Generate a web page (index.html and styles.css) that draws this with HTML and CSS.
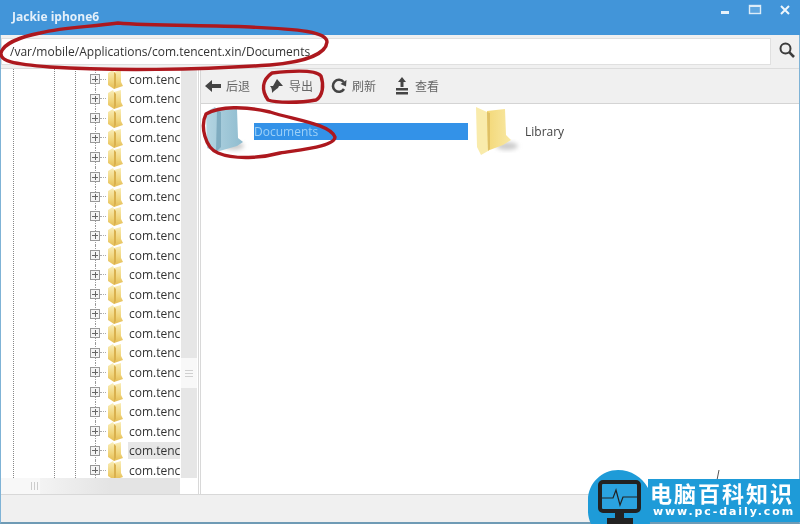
FILE: index.html
```html
<!DOCTYPE html>
<html lang="zh">
<head>
<meta charset="utf-8">
<title>Jackie iphone6</title>
<link rel="stylesheet" href="styles.css">
</head>
<body>
<svg width="0" height="0" class="defs">
  <defs>
    <linearGradient id="yel" x1="0" y1="0" x2="0" y2="1"><stop offset="0" stop-color="#f9edb8"/><stop offset="0.6" stop-color="#f0d47a"/><stop offset="1" stop-color="#e4bc55"/></linearGradient>
    <symbol id="tf" viewBox="0 0 16 20">
      <path d="M1 4 L6 1 L7 3 L14 1 L14 13 L16 17 L7 20 L1 16 Z" fill="url(#yel)"/>
      <path d="M7 3 L9 5 L9 17 L7 20 Z" fill="#d9b04e"/>
    </symbol>
    <filter id="soft" x="-30%" y="-30%" width="160%" height="160%"><feGaussianBlur stdDeviation="2"/></filter>
  </defs>
</svg>
<div class="window">
  <header class="titlebar">
    <span class="title">Jackie iphone6</span>
    <div class="winctl">
      <svg width="12" height="12" viewBox="0 0 12 12"><rect x="2" y="7" width="8" height="3" fill="#e6f1fa"/></svg>
      <svg width="14" height="12" viewBox="0 0 14 12"><rect x="1.500" y="1.500" width="11" height="8" fill="#5ea6e0" stroke="#dcecf8" stroke-width="1.400"/><rect x="1" y="1" width="12" height="2" fill="#dcecf8"/></svg>
      <svg width="12" height="12" viewBox="0 0 12 12"><path d="M2 2 L10 10 M10 2 L2 10" stroke="#eef6fc" stroke-width="2"/></svg>
    </div>
  </header>
  <div class="addr">
    <div class="path">/var/mobile/Applications/com.tencent.xin/Documents</div>
    <button class="search" aria-label="search">
      <svg width="18" height="18" viewBox="0 0 18 18"><circle cx="7.500" cy="7.500" r="5" fill="none" stroke="#3c3c3c" stroke-width="2"/><path d="M11.200 11.200 L16 16" stroke="#3c3c3c" stroke-width="2.600"/></svg>
    </button>
  </div>
  <div class="body">
    <aside class="side">
      <div class="treewrap">
        <div class="guides"><i></i><i></i><i></i></div>
        <ul class="tree">
          <li class="row"><b class="exp"></b><s class="dots"></s><svg class="tf"><use href="#tf"/></svg><span>com.tenc</span></li>
          <li class="row"><b class="exp"></b><s class="dots"></s><svg class="tf"><use href="#tf"/></svg><span>com.tenc</span></li>
          <li class="row"><b class="exp"></b><s class="dots"></s><svg class="tf"><use href="#tf"/></svg><span>com.tenc</span></li>
          <li class="row"><b class="exp"></b><s class="dots"></s><svg class="tf"><use href="#tf"/></svg><span>com.tenc</span></li>
          <li class="row"><b class="exp"></b><s class="dots"></s><svg class="tf"><use href="#tf"/></svg><span>com.tenc</span></li>
          <li class="row"><b class="exp"></b><s class="dots"></s><svg class="tf"><use href="#tf"/></svg><span>com.tenc</span></li>
          <li class="row"><b class="exp"></b><s class="dots"></s><svg class="tf"><use href="#tf"/></svg><span>com.tenc</span></li>
          <li class="row"><b class="exp"></b><s class="dots"></s><svg class="tf"><use href="#tf"/></svg><span>com.tenc</span></li>
          <li class="row"><b class="exp"></b><s class="dots"></s><svg class="tf"><use href="#tf"/></svg><span>com.tenc</span></li>
          <li class="row"><b class="exp"></b><s class="dots"></s><svg class="tf"><use href="#tf"/></svg><span>com.tenc</span></li>
          <li class="row"><b class="exp"></b><s class="dots"></s><svg class="tf"><use href="#tf"/></svg><span>com.tenc</span></li>
          <li class="row"><b class="exp"></b><s class="dots"></s><svg class="tf"><use href="#tf"/></svg><span>com.tenc</span></li>
          <li class="row"><b class="exp"></b><s class="dots"></s><svg class="tf"><use href="#tf"/></svg><span>com.tenc</span></li>
          <li class="row"><b class="exp"></b><s class="dots"></s><svg class="tf"><use href="#tf"/></svg><span>com.tenc</span></li>
          <li class="row"><b class="exp"></b><s class="dots"></s><svg class="tf"><use href="#tf"/></svg><span>com.tenc</span></li>
          <li class="row"><b class="exp"></b><s class="dots"></s><svg class="tf"><use href="#tf"/></svg><span>com.tenc</span></li>
          <li class="row"><b class="exp"></b><s class="dots"></s><svg class="tf"><use href="#tf"/></svg><span>com.tenc</span></li>
          <li class="row"><b class="exp"></b><s class="dots"></s><svg class="tf"><use href="#tf"/></svg><span>com.tenc</span></li>
          <li class="row"><b class="exp"></b><s class="dots"></s><svg class="tf"><use href="#tf"/></svg><span>com.tenc</span></li>
          <li class="row hl"><b class="exp"></b><s class="dots"></s><svg class="tf"><use href="#tf"/></svg><span>com.tenc</span></li>
          <li class="row"><b class="exp"></b><s class="dots"></s><svg class="tf"><use href="#tf"/></svg><span>com.tenc</span></li>
        </ul>
        <div class="vscroll"><div class="vtrack top"></div><div class="vthumb"><em></em><em></em><em></em></div><div class="vtrack"></div></div>
      </div>
      <div class="hscroll"><div class="hthumb"><em></em><em></em><em></em></div><div class="htrack"></div><div class="hend"></div></div>
    </aside>
    <main class="main">
      <nav class="toolbar">
        <span class="tool">
          <svg width="16" height="14" viewBox="0 0 16 14"><path d="M0 7 L7 1 L7 5 L16 5 L16 9 L7 9 L7 13 Z" fill="#444"/></svg>后退
        </span>
        <span class="tool">
          <svg width="16" height="16" viewBox="0 0 16 16"><path d="M9 1 L15 8 L11 8 L10 10 C8 11 6 13 4 15 C4 12 4 10 2 8 L5 8 Z" fill="#444"/></svg>导出
        </span>
        <span class="tool">
          <svg width="16" height="16" viewBox="0 0 16 16"><path d="M13 11 A6 6 0 1 1 12.600 4" fill="none" stroke="#444" stroke-width="2.600"/><path d="M15.500 2 L15 8.500 L9.500 6 Z" fill="#444"/></svg>刷新
        </span>
        <span class="tool">
          <svg width="16" height="18" viewBox="0 0 16 18"><path d="M8 0 L12 5 L9.500 5 L9.500 10 L6.500 10 L6.500 5 L4 5 Z" fill="#444"/><rect x="2" y="11" width="12" height="2.500" fill="#444"/><rect x="2" y="15" width="12" height="2.500" fill="#444"/></svg>查看
        </span>
      </nav>
      <section class="files">
        <div class="file sel">
          <svg class="bigf" width="52" height="52" viewBox="0 0 52 52">
            <defs><linearGradient id="blu" x1="0" y1="0" x2="1" y2="0"><stop offset="0" stop-color="#b4d5e2"/><stop offset="1" stop-color="#8fbccf"/></linearGradient></defs>
            <ellipse cx="33" cy="41" rx="10" ry="4" fill="#ccc" filter="url(#soft)"/>
            <path d="M5 7 L14 2 L16 5 L36 4 L37 33 L42 37 L36 41 L15 47 L6 43 Z" fill="url(#blu)"/>
            <path d="M16 5 L20 7 L20 42 L15 47 Z" fill="#7facc0"/>
          </svg>
          <span class="name"><span class="nametxt">Documents</span></span>
        </div>
        <div class="file lib">
          <svg class="bigf" width="52" height="52" viewBox="0 0 52 52">
            <defs><linearGradient id="ye2" x1="0" y1="0" x2="1" y2="0"><stop offset="0" stop-color="#f3d878"/><stop offset="1" stop-color="#f8e8a4"/></linearGradient></defs>
            <ellipse cx="32" cy="41" rx="11" ry="4" fill="#ccc" filter="url(#soft)"/>
            <path d="M12 6 L30 4 L31 30 L36 35 L28 40 L12 46 Z" fill="url(#ye2)"/>
            <path d="M1 2 L12 7 L13 46 L6 50 L2 42 Z" fill="#f9ebab"/>
            <path d="M12 7 L15 8 L15 44 L13 46 Z" fill="#dfc065"/>
          </svg>
          <span class="libname">Library</span>
        </div>
      </section>
    </main>
  </div>
  <footer class="status"></footer>
</div>

<svg class="marks" width="800" height="524" viewBox="0 0 800 524" aria-hidden="true">
  <g fill="none" stroke="#ad181e" stroke-width="3.400" stroke-linejoin="round" stroke-linecap="round">
    <path d="M118 23 C90 27 65 27 40 33 C20 37 3 44 1 53 C0 61 12 64 50 67 C110 71 200 70 270 65 C305 62 326 54 327 42 C327 32 300 29 250 27 C200 25 150 26 118 23 Z"/>
    <path d="M272 73 C290 71 315 69 321 76 C324 85 323 96 316 100 C300 103 276 103 268 100 C261 90 262 80 272 73 Z"/>
    <path d="M206 114 C220 106 245 106 270 112 C295 120 330 124 335 137 C335 146 305 149 280 153 C262 158 235 160 218 153 C205 148 200 126 206 114 Z"/>
  </g>
  <path d="M719 470 L717 480" stroke="#555" stroke-width="1"/>
</svg>

<div class="brand">
  <svg class="brandicon" width="62" height="55" viewBox="0 0 62 55">
    <path d="M30 1 C43 1 54 8 60 19 L62 55 L3 55 C-1 47 0 40 0 31 C0 14 14 1 30 1 Z" fill="#1e9bd8"/>
    <rect x="12" y="13" width="39" height="29" rx="3" fill="#2aa2df" stroke="#222" stroke-width="4"/>
    <path d="M14 29 L25 29 L28 21 L32 36 L35 28 L49 28" fill="none" stroke="#222" stroke-width="1.200"/>
    <rect x="27" y="43" width="9" height="6" fill="#222"/>
    <rect x="19" y="49" width="26" height="6" fill="#222"/>
  </svg>
  <div class="brandtxt">
    <div class="cn">电脑百科知识</div>
    <div class="url">www.pc-daily.com</div>
  </div>
</div>
</body>
</html>
```
FILE: styles.css
```css
* { box-sizing: border-box; }
html, body { margin: 0; padding: 0; }
body { width: 800px; height: 524px; overflow: hidden; position: relative; background: #fff; font-family: "Open Sans", "Noto Sans CJK SC", sans-serif; color: #333; }
.defs { position: absolute; }

.window { width: 800px; height: 524px; display: flex; flex-direction: column; background: #fff; border-bottom: 2px solid #6f9bb5; border-left: 1px solid #7fb3d6; border-right: 1px solid #7fb3d6; filter: blur(0.35px); }
.titlebar { height: 35px; margin: 0 -1px; background: #4295d9; display: flex; align-items: flex-start; justify-content: space-between; padding: 0 9px 0 12px; flex: none; }
.title { font: 700 12px/34px "Open Sans", sans-serif; color: #e4f0fa; }
.winctl { display: flex; gap: 17px; padding-top: 4px; align-items: center; }

.addr { height: 34px; flex: none; display: flex; background: #f0f0f0; padding: 3px 0; border-bottom: 1px solid #dcdcdc; }
.path { width: 770px; height: 27px; background: #fff; border: 1px solid #e0e0e0; font-size: 12px; line-height: 25px; padding-left: 8px; color: #333; white-space: nowrap; }
.search { flex: 1; border: 0; background: none; padding: 3px 0 0 4px; display: flex; justify-content: center; }

.body { flex: 1; min-height: 0; display: flex; }
.side { width: 200px; flex: none; display: flex; flex-direction: column; border-right: 3px double #d8d8d8; background: #fff; }
.treewrap { flex: 1; min-height: 0; display: flex; position: relative; overflow: hidden; }
.guides { position: absolute; inset: 0; pointer-events: none; }
.guides i { position: absolute; top: 0; bottom: 0; width: 0; border-left: 1px dotted #888; }
.guides i:nth-child(1) { left: 12px; }
.guides i:nth-child(2) { left: 53px; }
.guides i:nth-child(3) { left: 74px; }
.tree { list-style: none; margin: 0; padding: 0.5px 0 0; width: 180px; flex: none; overflow: hidden; position: relative; }
.row { height: 19.55px; display: flex; align-items: center; padding-left: 89px; position: relative; white-space: nowrap; font-size: 12px; color: #333; }
.row::before { content: ""; position: absolute; left: 94px; top: 0; bottom: 0; border-left: 1px dotted #999; }
.row > * { position: relative; flex: none; }
.row span { margin-left: 5px; padding: 0 0 0 1px; display: block; width: 52px; }
.row.hl span { background: #e6e6e6; }
.exp { width: 10px; height: 10px; border: 1px solid #999; background: linear-gradient(#666,#666) center / 6px 1px no-repeat, linear-gradient(#666,#666) center / 1px 6px no-repeat, #f4f4f4; display: block; }
.dots { width: 6px; border-top: 1px dotted #aaa; display: block; }
.tf { width: 16px; height: 20px; margin-left: 1px; }

.vscroll { flex: 1; display: flex; flex-direction: column; margin-right: 1px; }
.vtrack { flex: 1; background: #e6e6e6; }
.vtrack.top { flex: none; height: 289px; }
.vthumb { height: 30px; background: #f8f8f8; display: flex; flex-direction: column; align-items: center; justify-content: center; gap: 2px; }
.vthumb em { width: 8px; height: 1px; background: #d0d0d0; display: block; }

.hscroll { height: 16px; flex: none; display: flex; }
.hthumb { width: 39px; background: #f8f8f8; display: flex; justify-content: flex-end; align-items: center; gap: 2px; padding-right: 2px; }
.hthumb em { width: 1px; height: 8px; background: #ccc; display: block; }
.htrack { width: 140px; background: linear-gradient(90deg, #f3f3f3, #e4e4e4 50%); }
.hend { flex: 1; background: #fff; }

.main { flex: 1; min-width: 0; display: flex; flex-direction: column; }
.toolbar { height: 35px; flex: none; background: #f0f0f0; border-bottom: 1px solid #d4d4d4; display: flex; align-items: center; padding-left: 4px; gap: 18px; font-size: 12px; color: #666; }
.tool { display: flex; align-items: center; gap: 5px; }
.files { flex: 1; display: flex; align-items: flex-start; padding-top: 0; }
.file { display: flex; align-items: center; height: 54px; }
.sel { width: 268px; }
.name { margin-left: 1px; width: 214px; height: 17px; background: #3392e8; display: block; margin-bottom: 0; }
.nametxt { font-size: 12px; line-height: 17px; color: #9cd0f7; display: block; }
.libname { font-size: 12px; margin-left: -2px; color: #444; }
.bigf { flex: none; }
.lib { margin-left: 6px; }

.status { height: 28px; flex: none; background: #f0f0f0; border-top: 1px solid #d8d8d8; }

.marks { position: absolute; left: 0; top: 0; filter: blur(0.35px); }
.brand { position: absolute; left: 588px; top: 469px; width: 212px; height: 55px; filter: blur(0.3px); }
.brandicon { position: absolute; left: 0; bottom: 0; }
.brandtxt { position: absolute; left: 60px; right: 0; top: 10px; bottom: 2px; background: #1e9bd8; padding-left: 2px; color: #fff; }
.cn { font: 700 22px/26px "Noto Sans CJK SC", sans-serif; letter-spacing: 2px; white-space: nowrap; }
.url { font: 700 11px/14px "DejaVu Sans", sans-serif; letter-spacing: 1.900px; white-space: nowrap; margin-left: 3px; }
```
